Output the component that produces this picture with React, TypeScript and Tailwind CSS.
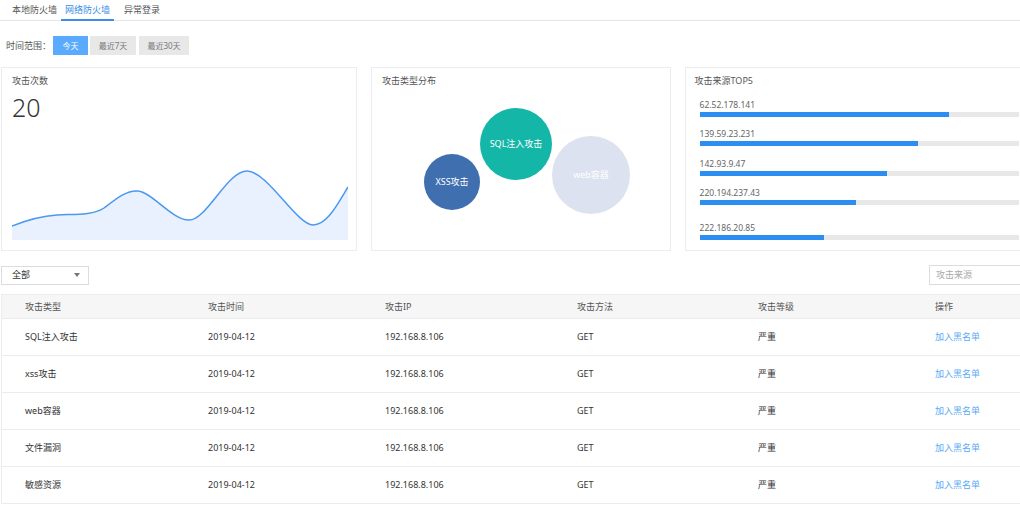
import React from "react";

const font = { fontFamily: '"Noto Sans", "Noto Sans CJK SC", sans-serif' };

const sources = [
  { ip: "62.52.178.141", w: 249, mt: "mt-[11px]" },
  { ip: "139.59.23.231", w: 218, mt: "mt-[11px]" },
  { ip: "142.93.9.47", w: 187, mt: "mt-[12px]" },
  { ip: "220.194.237.43", w: 156, mt: "mt-[11px]" },
  { ip: "222.186.20.85", w: 124, mt: "mt-[17px]" },
];

const rows = ["SQL注入攻击", "xss攻击", "web容器", "文件漏洞", "敏感资源"];

const cols = "grid grid-cols-[206px_177px_192px_181px_177px_1fr] items-center";

export default function App() {
  return (
    <div className="w-[1020px] h-[509px] overflow-hidden bg-white text-[9px] text-[#333]" style={font}>
      <div className="w-[1040px]">
        {/* tabs */}
        <div className="flex pl-[8px] border-b border-[#e6e6e6] h-[21px]">
          <div className="px-[4px] h-[21px] leading-[20px] text-[#555]">本地防火墙</div>
          <div className="px-[4px] h-[21px] leading-[20px] text-[#3a8ee6] border-b-2 border-[#3a8ee6]">
            网络防火墙
          </div>
          <div className="ml-[6px] px-[4px] h-[21px] leading-[20px] text-[#555]">异常登录</div>
        </div>

        {/* time range */}
        <div className="flex items-center mt-[15px] pl-[6px]">
          <span className="text-[#555] w-[47px]">时间范围：</span>
          <button className="w-[35px] h-[19px] bg-[#5aabff] text-white text-[8px]">今天</button>
          <button className="ml-[2px] w-[46px] h-[19px] bg-[#e8e8e8] text-[#777] text-[8px]">最近7天</button>
          <button className="ml-[3px] w-[50px] h-[19px] bg-[#e8e8e8] text-[#777] text-[8px]">最近30天</button>
        </div>

        {/* cards */}
        <div className="flex mt-[12px] pl-[1px] gap-[14px]">
          <div className="w-[356px] h-[184px] border border-[#ececec] px-[10px] pt-[6px]">
            <div className="text-[#555]">攻击次数</div>
            <div className="text-[25px] leading-[30px] font-light text-[#333] mt-[4px]">20</div>
            <svg width="336" height="70" viewBox="0 0 336 70" className="block mt-[48px]">
              <path
                d="M0,56 C15,50 30,46 45,45 C60,44 80,46 92,38 C105,28 115,20 126,21 C140,22 160,50 177,50 C195,50 215,1 235,1 C255,1 285,55 301,55 C315,55 325,35 336,17 L336,70 L0,70 Z"
                fill="#e8f1fd"
              />
              <path
                d="M0,56 C15,50 30,46 45,45 C60,44 80,46 92,38 C105,28 115,20 126,21 C140,22 160,50 177,50 C195,50 215,1 235,1 C255,1 285,55 301,55 C315,55 325,35 336,17"
                fill="none"
                stroke="#4a98f0"
                strokeWidth="1.5"
              />
            </svg>
          </div>

          <div className="w-[300px] h-[184px] border border-[#ececec] px-[10px] pt-[6px] relative">
            <div className="text-[#555]">攻击类型分布</div>
            <svg width="300" height="184" className="absolute left-0 top-0">
              <circle cx="144" cy="76" r="36" fill="#14b6a7" />
              <text x="144" y="79" textAnchor="middle" fill="#fff" fontSize="9">SQL注入攻击</text>
              <circle cx="80" cy="114" r="28" fill="#3f6fae" />
              <text x="80" y="117" textAnchor="middle" fill="#fff" fontSize="9">XSS攻击</text>
              <circle cx="219" cy="107" r="39" fill="#dce2ef" />
              <text x="219" y="110" textAnchor="middle" fill="#fff" fontSize="9">web容器</text>
            </svg>
          </div>

          <div className="w-[356px] h-[184px] border border-[#ececec] pl-[9px] pt-[6px]">
            <div className="text-[#555]">攻击来源TOP5</div>
            <div className="pl-[5px] pr-[20px]">
              {sources.map((s) => (
                <div key={s.ip} className={s.mt}>
                  <div className="text-[8.5px] leading-[11px] text-[#666]">{s.ip}</div>
                  <div className="mt-[2px] h-[5px] bg-[#e8e8e8]">
                    <div className="h-[5px] bg-[#2b8ef0]" style={{ width: s.w }} />
                  </div>
                </div>
              ))}
            </div>
          </div>
        </div>

        {/* filters */}
        <div className="flex items-center justify-between mt-[14px] pl-[1px]">
          <div className="w-[88px] h-[19px] border border-[#dcdcdc] flex items-center justify-between pl-[10px] pr-[8px] text-[#333]">
            <span>全部</span>
            <svg width="6" height="4" viewBox="0 0 6 4">
              <path d="M0,0 L6,0 L3,4 Z" fill="#777" />
            </svg>
          </div>
          <div className="w-[111px] h-[20px] border border-[#dcdcdc] flex items-center pl-[6px] text-[#aaa]">攻击来源</div>
        </div>

        {/* table */}
        <div className="mt-[9px] ml-[1px] border-l border-[#ececec]">
          <div className={`${cols} h-[25px] bg-[#f6f6f7] border-y border-[#ececec] text-[#555]`}>
            <div className="pl-[23px]">攻击类型</div>
            <div>攻击时间</div>
            <div>攻击IP</div>
            <div>攻击方法</div>
            <div>攻击等级</div>
            <div>操作</div>
          </div>
          {rows.map((r) => (
            <div key={r} className={`${cols} h-[37px] border-b border-[#ececec] text-[#333]`}>
              <div className="pl-[23px]">{r}</div>
              <div>2019-04-12</div>
              <div>192.168.8.106</div>
              <div>GET</div>
              <div>严重</div>
              <div className="text-[#5aaaf5]">加入黑名单</div>
            </div>
          ))}
        </div>
      </div>
    </div>
  );
}
